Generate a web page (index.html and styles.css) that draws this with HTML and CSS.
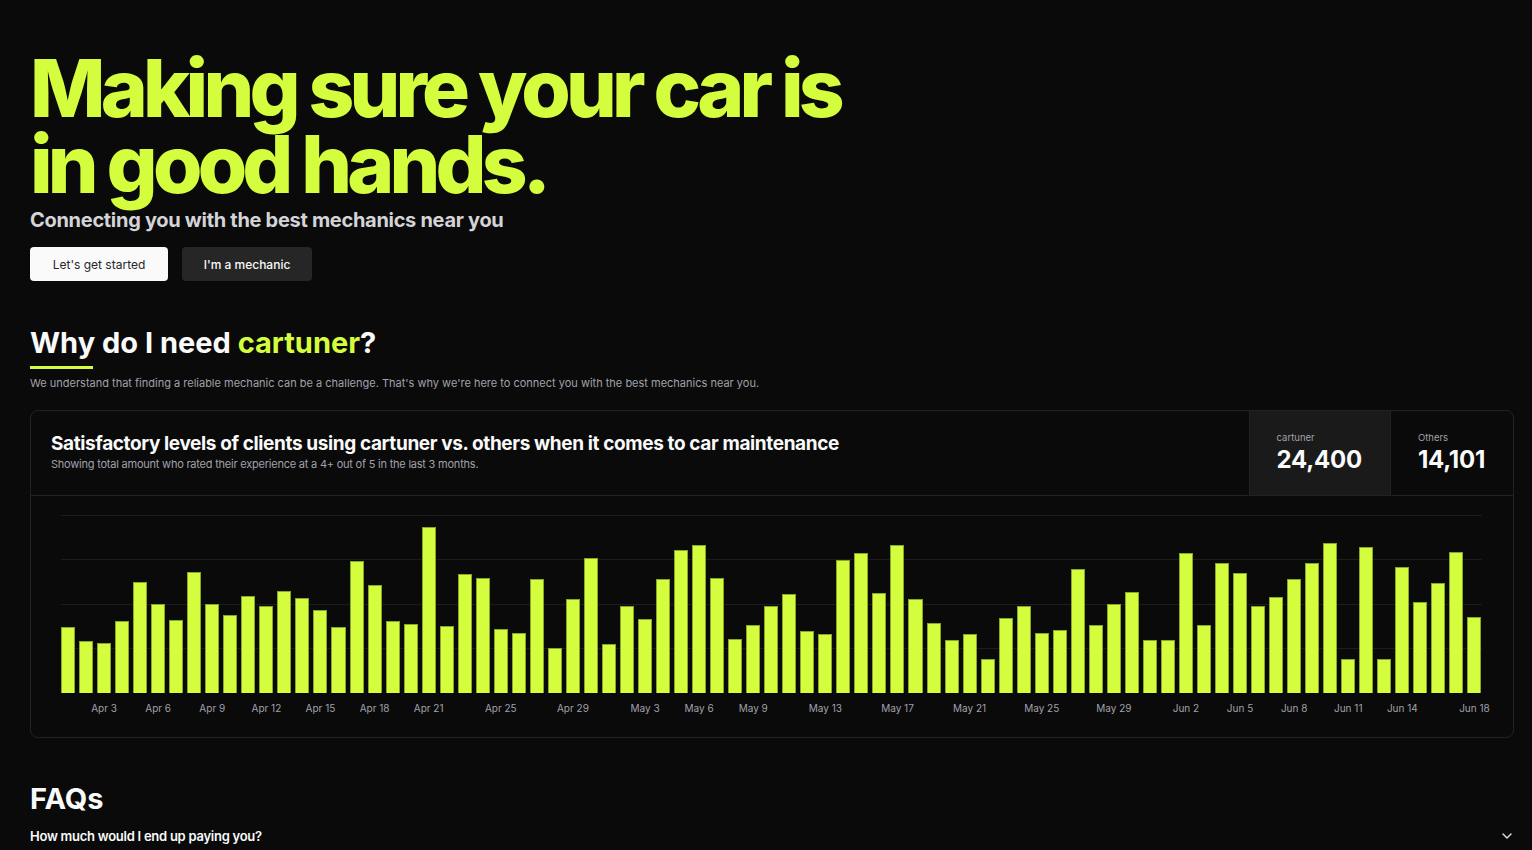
FILE: index.html
```html
<!DOCTYPE html>
<html lang="en">
<head>
<meta charset="utf-8">
<title>cartuner</title>
<link rel="stylesheet" href="styles.css">
</head>
<body>
<main class="page">
  <section class="hero">
    <h1 class="hero-title">Making sure your car is<br>in good hands.</h1>
    <p class="hero-sub">Connecting you with the best mechanics near you</p>
    <div class="hero-actions">
      <button class="btn btn-light">Let's get started</button>
      <button class="btn btn-dark">I'm a mechanic</button>
    </div>
  </section>

  <section class="why">
    <h2 class="section-title">Why do I need <span class="accent">cartuner</span>?</h2>
    <div class="underline"></div>
    <p class="why-text">We understand that finding a reliable mechanic can be a challenge. That's why we're here to connect you with the best mechanics near you.</p>

    <div class="card">
      <div class="card-head">
        <div class="card-intro">
          <h3 class="card-title">Satisfactory levels of clients using cartuner vs. others when it comes to car maintenance</h3>
          <p class="card-sub">Showing total amount who rated their experience at a 4+ out of 5 in the last 3 months.</p>
        </div>
        <div class="stat stat-active">
          <span class="stat-label">cartuner</span>
          <span class="stat-value">24,400</span>
        </div>
        <div class="stat">
          <span class="stat-label">Others</span>
          <span class="stat-value">14,101</span>
        </div>
      </div>
      <div class="chart">
        <div class="plot" id="plot"></div>
        <div class="axis" id="axis"></div>
      </div>
    </div>
  </section>

  <section class="faq">
    <h2 class="section-title">FAQs</h2>
    <div class="faq-item">
      <span class="faq-q">How much would I end up paying you?</span>
      <svg class="chev" width="10" height="6" viewBox="0 0 10 6"><polyline points="1,1 5,5 9,1" fill="none" stroke="#e5e5e5" stroke-width="1.4" stroke-linecap="round" stroke-linejoin="round"/></svg>
    </div>
  </section>
</main>
<script src="app.js"></script>
</body>
</html>
```
FILE: app.js
```js
(function () {
  var heights = [66,52,50,72,111,89,73,121,89,78,97,87,102,95,83,66,132,108,72,69,166,67,119,115,64,60,114,45,94,135,49,87,74,114,143,148,115,54,68,87,99,62,59,133,140,100,148,94,70,53,59,34,75,87,60,63,124,68,89,101,53,53,140,68,130,120,87,96,114,130,150,34,146,34,126,91,110,141,76];
  var labels = {3:"Apr 3",6:"Apr 6",9:"Apr 9",12:"Apr 12",15:"Apr 15",18:"Apr 18",21:"Apr 21",25:"Apr 25",29:"Apr 29",33:"May 3",36:"May 6",39:"May 9",43:"May 13",47:"May 17",51:"May 21",55:"May 25",59:"May 29",63:"Jun 2",66:"Jun 5",69:"Jun 8",72:"Jun 11",75:"Jun 14",79:"Jun 18"};
  var plot = document.getElementById('plot');
  var axis = document.getElementById('axis');
  heights.forEach(function (h, i) {
    var b = document.createElement('div');
    b.className = 'bar';
    b.style.height = h + 'px';
    plot.appendChild(b);
    var c = document.createElement('div');
    c.className = 'tick';
    var t = labels[i + 1];
    if (t) {
      var s = document.createElement('span');
      s.textContent = t;
      c.appendChild(s);
    }
    axis.appendChild(c);
  });
})();
```
FILE: styles.css
```css
* { box-sizing: border-box; }
html, body { margin: 0; padding: 0; background: #0a0a0a; }
body {
  font-family: Inter, "Noto Sans", sans-serif;
  color: #fafafa;
  width: 1532px;
  height: 850px;
  overflow: hidden;
}
.page { padding: 50px 18px 0 30px; }

.hero-title {
  margin: 0;
  font-size: 80px;
  line-height: 76px;
  font-weight: 800;
  letter-spacing: -0.06em;
  color: #d4fd3e;
}
.hero-sub {
  margin: 4px 0 0;
  font-size: 20px;
  line-height: 28px;
  font-weight: 700;
  color: #d4d4d8;
  letter-spacing: -0.015em;
}
.hero-actions { display: flex; gap: 14px; margin-top: 13px; }
.btn {
  font-family: inherit;
  font-size: 12px;
  height: 34px;
  border: none;
  border-radius: 4px;
  cursor: pointer;
}
.btn-light { width: 138px; background: #fafafa; color: #27272a; font-weight: 400; }
.btn-dark { width: 130px; background: #262626; color: #fafafa; font-weight: 500; }

.why { margin-top: 45px; }
.section-title {
  margin: 0;
  font-size: 29px;
  line-height: 34px;
  font-weight: 700;
  letter-spacing: 0;
  color: #fafafa;
}
.accent { color: #d4fd3e; }
.underline { width: 63px; height: 3px; background: #d4fd3e; margin-top: 6px; }
.why-text {
  margin: 6px 0 0;
  font-size: 11px;
  line-height: 16px;
  letter-spacing: 0;
  color: #a1a1aa;
}

.card {
  margin-top: 19px;
  width: 1484px;
  border: 1px solid #222;
  border-radius: 8px;
  overflow: hidden;
}
.card-head {
  display: flex;
  height: 85px;
  border-bottom: 1px solid #222;
}
.card-intro {
  flex: 1;
  display: flex;
  flex-direction: column;
  justify-content: center;
  padding: 0 20px 2px;
}
.card-title {
  margin: 0;
  font-size: 19px;
  line-height: 24px;
  font-weight: 700;
  letter-spacing: -0.02em;
  color: #fafafa;
}
.card-sub {
  margin: 0;
  font-size: 11px;
  line-height: 16px;
  letter-spacing: -0.02em;
  color: #a1a1aa;
}
.stat {
  display: flex;
  flex-direction: column;
  padding: 20px 28px 0 27px;
  border-left: 1px solid #222;
}
.stat-active { background: #1a1a1a; }
.stat-label { font-size: 9.5px; line-height: 14px; color: #a1a1aa; }
.stat-value {
  font-size: 24px;
  line-height: 30px;
  font-weight: 700;
  letter-spacing: -0.01em;
  color: #fafafa;
}

.chart { padding: 19px 31px 22px 30px; }
.plot {
  height: 178px;
  display: flex;
  align-items: flex-end;
  gap: 4px;
  background:
    linear-gradient(#1c1c1c, #1c1c1c) 0 0 / 100% 1px no-repeat,
    linear-gradient(#1c1c1c, #1c1c1c) 0 44px / 100% 1px no-repeat,
    linear-gradient(#1c1c1c, #1c1c1c) 0 89px / 100% 1px no-repeat,
    linear-gradient(#1c1c1c, #1c1c1c) 0 133px / 100% 1px no-repeat;
}
.bar {
  flex: 1;
  min-width: 0;
  background: #d4fd3e;
  border: 1px solid #8aa827;
  border-bottom: none;
}
.axis {
  display: flex;
  gap: 4px;
  margin-top: 8px;
  height: 14px;
}
.tick {
  flex: 1;
  min-width: 0;
  display: flex;
  justify-content: center;
}
.tick span {
  flex-shrink: 0;
  white-space: nowrap;
  font-size: 10px;
  line-height: 14px;
  color: #a1a1aa;
}

.faq { margin-top: 44px; }
.faq-item {
  display: flex;
  align-items: center;
  justify-content: space-between;
  width: 1484px;
  margin-top: 11px;
  padding-right: 2px;
}
.faq-q {
  font-size: 13px;
  line-height: 18px;
  font-weight: 600;
  letter-spacing: -0.02em;
  color: #fafafa;
}
```
